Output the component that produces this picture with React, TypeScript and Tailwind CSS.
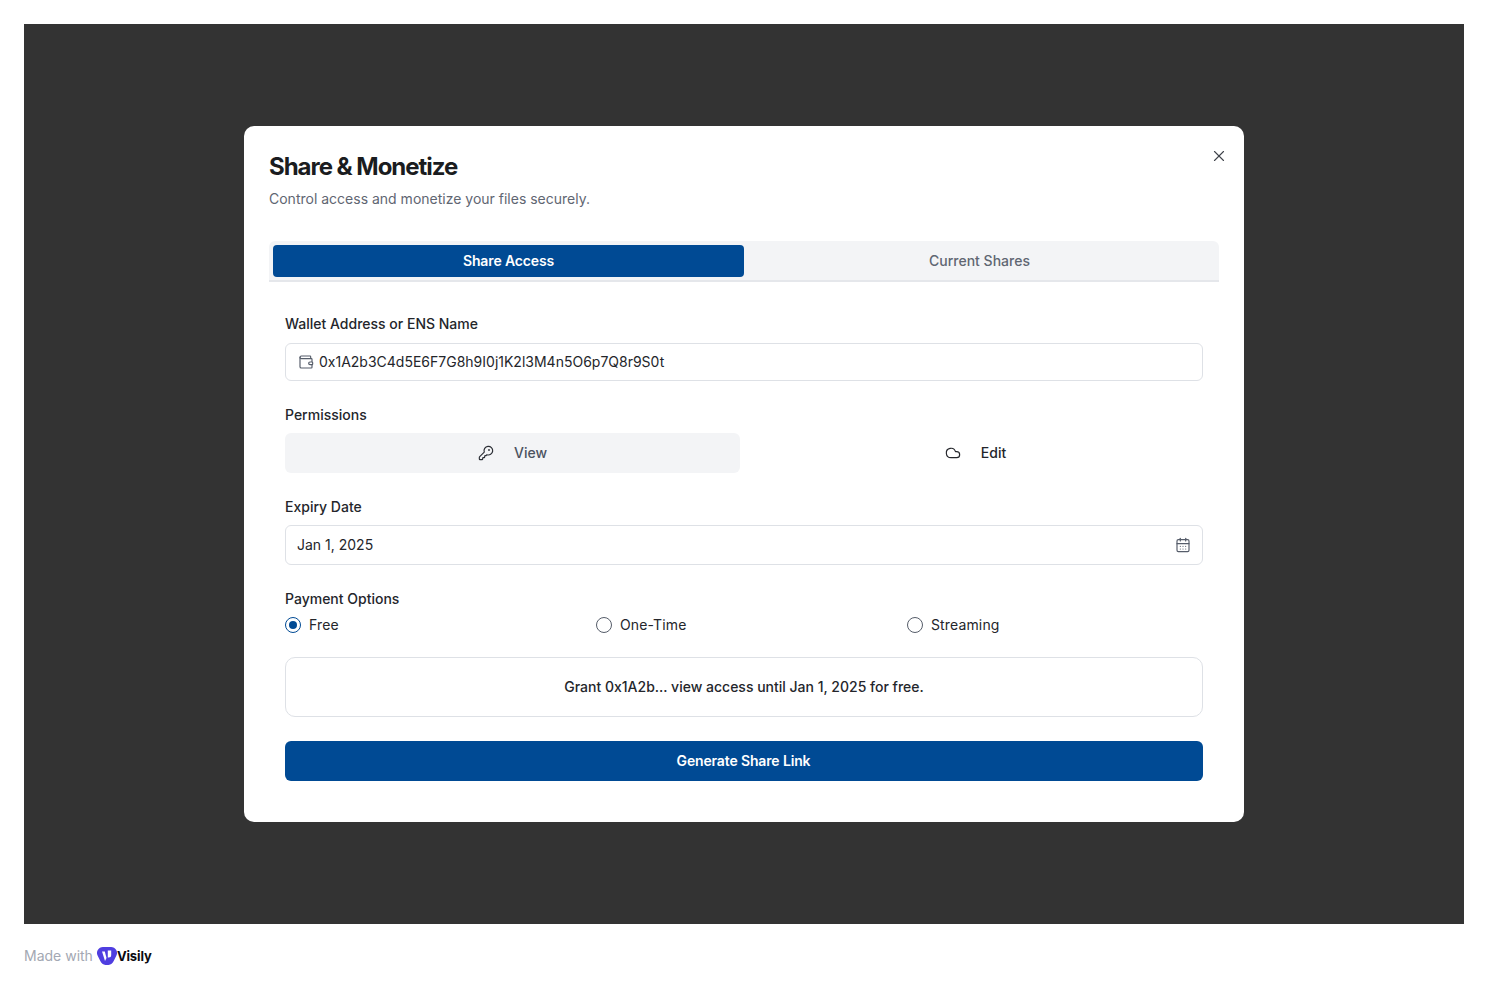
import React from "react";
import { CalendarDays, Cloud, KeyRound, Wallet, X } from "lucide-react";

const font = "font-['Inter',sans-serif]";

const Label: React.FunctionComponent<{ text: string }> = ({ text }) => (
  <div className="h-5 text-sm leading-5 font-medium text-[#24262b]">{text}</div>
);

const Radio: React.FunctionComponent<{ text: string; checked?: boolean }> = ({
  text,
  checked,
}) => (
  <div className="flex flex-1 items-center gap-2">
    <span
      className={
        checked
          ? "flex h-4 w-4 items-center justify-center rounded-full border border-[#004a94]"
          : "flex h-4 w-4 items-center justify-center rounded-full border border-[#565d6a]"
      }
    >
      {checked && <span className="h-2 w-2 rounded-full bg-[#004a94]" />}
    </span>
    <span className="text-sm leading-5 tracking-[0.01em] text-[#24262b]">{text}</span>
  </div>
);

const App: React.FunctionComponent<{}> = () => {
  return (
    <div className={`${font} h-[988px] bg-white p-6 antialiased`}>
      <div className="flex h-[900px] items-start justify-center bg-[#333333] pt-[102px]">
        <div className="relative h-[696px] w-[1000px] rounded-[10px] bg-white px-[25px] pt-[25px]">
          <button className="absolute top-[21px] right-[16px] text-[#3f434a]">
            <X size={18} strokeWidth={1.5} />
          </button>
          <h2 className="text-2xl leading-8 font-bold tracking-[-0.043em] text-[#1a1c20]">
            Share & Monetize
          </h2>
          <p className="mt-[6px] text-sm leading-5 text-[#5f6672]">
            Control access and monetize your files securely.
          </p>

          <div className="mt-[32px] flex h-[41px] rounded-t-md border-b-2 border-[#e5e7eb] bg-[#f3f4f6] p-1 pb-[3px]">
            <div className="flex flex-1 items-center justify-center rounded-[4px] bg-[#004a94] text-sm font-semibold tracking-[-0.01em] text-white">
              Share Access
            </div>
            <div className="flex flex-1 items-center justify-center text-sm font-medium text-[#5f6672]">
              Current Shares
            </div>
          </div>

          <div className="px-4 pt-[32px]">
            <Label text="Wallet Address or ENS Name" />
            <div className="mt-[9px] flex h-[38px] items-center gap-[5px] rounded-md border border-[#dee1e6] px-3 text-sm text-[#24262b]">
              <Wallet size={16} strokeWidth={1.75} className="text-[#565d6a]" />
              0x1A2b3C4d5E6F7G8h9I0j1K2l3M4n5O6p7Q8r9S0t
            </div>

            <div className="mt-6">
              <Label text="Permissions" />
            </div>
            <div className="mt-2 flex h-10">
              <div className="flex w-[455px] items-center justify-center gap-5 rounded-md bg-[#f3f4f6] text-sm font-medium text-[#4b5260]">
                <KeyRound size={16} strokeWidth={1.75} className="text-[#2b2e35]" />
                View
              </div>
              <div className="flex flex-1 items-center justify-center gap-5 pl-[8px] text-sm font-medium text-[#24262b]">
                <Cloud size={16} strokeWidth={1.75} />
                Edit
              </div>
            </div>

            <div className="mt-6">
              <Label text="Expiry Date" />
            </div>
            <div className="mt-2 flex h-10 items-center justify-between rounded-md border border-[#dee1e6] px-[11px] text-sm text-[#24262b]">
              Jan 1, 2025
              <CalendarDays size={16} strokeWidth={1.75} className="text-[#565d6a]" />
            </div>

            <div className="mt-6">
              <Label text="Payment Options" />
            </div>
            <div className="mt-[6px] flex h-5 items-center gap-[15px]">
              <Radio text="Free" checked />
              <Radio text="One-Time" />
              <Radio text="Streaming" />
            </div>

            <div className="mt-[22px] flex h-[60px] items-center justify-center rounded-[10px] border border-[#dee1e6] text-sm font-medium text-[#24262b]">
              Grant 0x1A2b... view access until Jan 1, 2025 for free.
            </div>

            <button className="mt-6 flex h-10 w-full items-center justify-center rounded-md bg-[#004a94] pr-[1px] text-sm font-semibold tracking-[-0.01em] text-white">
              Generate Share Link
            </button>
          </div>
        </div>
      </div>

      <div className="mt-[22px] flex h-5 items-center gap-1 text-sm text-[#a3a8b3]">
        Made with
        <svg width="20" height="18" viewBox="0 0 20 18" className="shrink-0">
          <path
            d="M6 0h8a6 6 0 0 1 5.2 9l-2.500 5a7 7 0 0 1-5.200 4H8.500a7 7 0 0 1-5.200-4L.8 9A6 6 0 0 1 6 0z"
            fill="#4f3ee0"
          />
          <path d="M5 4.500h2.800l1.700 6.500-1.500 3z" fill="#ffffff" />
          <path d="M10.800 3.500h3.400v4.500a2.500 2.500 0 0 1-2.500 2.500h-.9z" fill="#ffffff" />
        </svg>
        <span className="-ml-[4px] text-[13px] font-bold tracking-[-0.01em] text-[#0b0b10]">
          Visily
        </span>
      </div>
    </div>
  );
};

export default App;
